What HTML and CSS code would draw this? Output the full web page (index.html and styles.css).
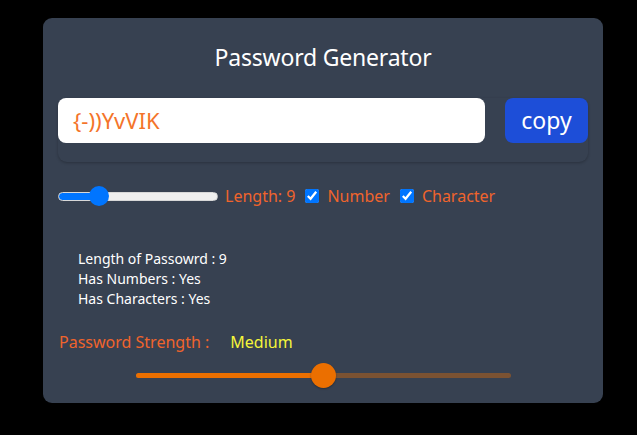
FILE: index.html
```html
<!DOCTYPE html>
<html>
<head>
<meta charset="utf-8">
<link rel="stylesheet" href="styles.css">
</head>
<body>
<div class="card">
  <h1 class="title">Password Generator</h1>
  <div class="input-group">
    <div class="pw-field">{-))YvVIK</div>
    <button class="copy">copy</button>
  </div>
  <div class="controls">
    <input type="range" class="len-range" min="6" max="20" value="9" style="background: linear-gradient(to right, #0075ff 0 24%, #efefef 24% 100%)">
    <span class="lbl">Length: 9</span>
    <input type="checkbox" class="cb" checked>
    <span class="lbl">Number</span>
    <input type="checkbox" class="cb" checked>
    <span class="lbl">Character</span>
  </div>
  <div class="info">
    <div>Length of Passowrd : 9</div>
    <div>Has Numbers : Yes</div>
    <div>Has Characters : Yes</div>
  </div>
  <div class="strength">
    <span class="s-label">Password Strength :</span>
    <span class="s-value">Medium</span>
  </div>
  <div class="meter-wrap">
    <div class="meter">
      <div class="meter-fill" style="width: 50%"></div>
      <div class="meter-thumb" style="left: 50%"></div>
    </div>
  </div>
</div>
</body>
</html>
```
FILE: styles.css
```css
html, body {
  margin: 0;
  padding: 0;
  background: #000;
}
body {
  font-family: "Noto Sans", "Open Sans", sans-serif;
  padding-top: 18px;
}
.card {
  width: 560px;
  height: 385px;
  margin-left: 43px;
  background: #374151;
  border-radius: 9px;
  box-sizing: border-box;
  padding: 0 15px;
}
.title {
  margin: 0;
  padding-top: 23px;
  height: 57px;
  box-sizing: border-box;
  font-weight: 400;
  font-size: 23px;
  line-height: 32px;
  color: #fff;
  text-align: center;
  letter-spacing: -0.2px;
}
.input-group {
  margin-top: 23px;
  display: flex;
  gap: 20px;
  height: 64px;
  border-radius: 9px;
  box-shadow: 0 1px 3px rgba(0,0,0,0.25);
  align-items: flex-start;
}
.pw-field {
  flex: 0 0 427px;
  height: 45px;
  background: #fff;
  border-radius: 8px;
  box-sizing: border-box;
  padding-left: 15px;
  font-size: 22px;
  line-height: 45px;
  color: #f4742a;
}
.copy {
  flex: 0 0 83px;
  height: 45px;
  border: none;
  border-radius: 8px;
  background: #1d4ed8;
  color: #fff;
  font-family: inherit;
  font-size: 23px;
  padding: 0;
  line-height: 45px;
}
.controls {
  display: flex;
  align-items: center;
  margin-top: 23px;
  height: 22px;
}
.len-range {
  -webkit-appearance: none;
  appearance: none;
  width: 160px;
  height: 9px;
  margin: 0 7px 0 0;
  border-radius: 5px;
  border: 1px solid #d8d8d8;
  box-sizing: border-box;
}
.len-range::-webkit-slider-thumb {
  -webkit-appearance: none;
  width: 20px;
  height: 20px;
  border-radius: 50%;
  background: #0075ff;
  border: none;
}
.lbl {
  color: #f0642c;
  font-size: 16px;
  line-height: 22px;
}
.cb {
  width: 14px;
  height: 14px;
  margin: 0 8px 0 10px;
  accent-color: #0075ff;
}
.info {
  margin-top: 42px;
  padding-left: 20px;
  color: #fff;
  font-size: 14px;
  line-height: 20px;
}
.strength {
  margin-top: 21px;
  display: flex;
  gap: 21px;
  font-size: 16px;
  line-height: 24px;
  padding-left: 1px;
}
.s-label { color: #f0642c; }
.s-value { color: #f5f53a; }
.meter-wrap {
  margin-top: 19px;
  padding-left: 78px;
}
.meter {
  position: relative;
  width: 375px;
  height: 5px;
  border-radius: 3px;
  background: rgba(235, 111, 0, 0.38);
}
.meter-fill {
  height: 100%;
  border-radius: 3px;
  background: #eb6f00;
}
.meter-thumb {
  position: absolute;
  top: 50%;
  width: 25px;
  height: 25px;
  margin: -12.5px 0 0 -12.5px;
  border-radius: 50%;
  background: #eb6f00;
  box-shadow: 0 1px 2px rgba(0,0,0,0.3);
}
```
